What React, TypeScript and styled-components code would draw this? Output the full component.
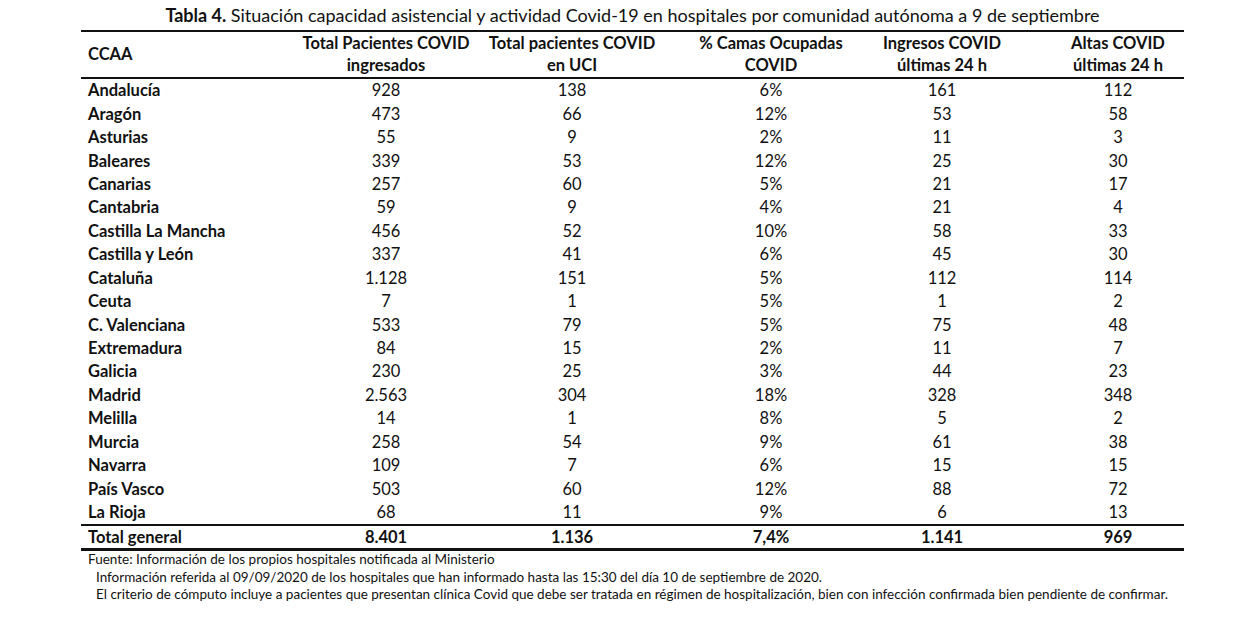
import React from 'react';
import styled, { createGlobalStyle } from 'styled-components';

const GlobalStyle = createGlobalStyle`
  *, *::before, *::after {
    box-sizing: border-box;
  }
  html, body {
    margin: 0;
    padding: 0;
    background: #fff;
  }
  body {
    font-family: Lato, "Open Sans", "Liberation Sans", sans-serif;
    color: #111;
  }
`;

type Row = [string, string, string, string, string, string];

const rows: Row[] = [
  ['Andalucía', '928', '138', '6%', '161', '112'],
  ['Aragón', '473', '66', '12%', '53', '58'],
  ['Asturias', '55', '9', '2%', '11', '3'],
  ['Baleares', '339', '53', '12%', '25', '30'],
  ['Canarias', '257', '60', '5%', '21', '17'],
  ['Cantabria', '59', '9', '4%', '21', '4'],
  ['Castilla La Mancha', '456', '52', '10%', '58', '33'],
  ['Castilla y León', '337', '41', '6%', '45', '30'],
  ['Cataluña', '1.128', '151', '5%', '112', '114'],
  ['Ceuta', '7', '1', '5%', '1', '2'],
  ['C. Valenciana', '533', '79', '5%', '75', '48'],
  ['Extremadura', '84', '15', '2%', '11', '7'],
  ['Galicia', '230', '25', '3%', '44', '23'],
  ['Madrid', '2.563', '304', '18%', '328', '348'],
  ['Melilla', '14', '1', '8%', '5', '2'],
  ['Murcia', '258', '54', '9%', '61', '38'],
  ['Navarra', '109', '7', '6%', '15', '15'],
  ['País Vasco', '503', '60', '12%', '88', '72'],
  ['La Rioja', '68', '11', '9%', '6', '13']
];

const total: Row = ['Total general', '8.401', '1.136', '7,4%', '1.141', '969'];

const headers = [
  ['Total Pacientes COVID', 'ingresados'],
  ['Total pacientes COVID', 'en UCI'],
  ['% Camas Ocupadas', 'COVID'],
  ['Ingresos COVID', 'últimas 24 h'],
  ['Altas COVID', 'últimas 24 h']
];

export default function App() {
  return (
    <>
      <GlobalStyle />
      <Page>
        <Title>
          <b>Tabla 4.</b> Situación capacidad asistencial y actividad Covid-19 en hospitales por
          comunidad autónoma a 9 de septiembre
        </Title>
        <Table>
          <HeaderRow>
            <NameCell>CCAA</NameCell>
            {headers.map((h, i) => (
              <HeadCell key={i}>
                <span>{h[0]}</span>
                <span>{h[1]}</span>
              </HeadCell>
            ))}
          </HeaderRow>
          {rows.map((r, i) => (
            <BodyRow key={r[0]} last={i === rows.length - 1}>
              <NameCell>{r[0]}</NameCell>
              {r.slice(1).map((v, j) => (
                <ValueCell key={j}>{v}</ValueCell>
              ))}
            </BodyRow>
          ))}
          <TotalRow>
            <NameCell>{total[0]}</NameCell>
            {total.slice(1).map((v, j) => (
              <ValueCell key={j}>{v}</ValueCell>
            ))}
          </TotalRow>
        </Table>
        <Notes>
          <Note>Fuente: Información de los propios hospitales notificada al Ministerio</Note>
          <Note indent>
            Información referida al 09/09/2020 de los hospitales que han informado hasta las 15:30
            del día 10 de septiembre de 2020.
          </Note>
          <Note indent>
            El criterio de cómputo incluye a pacientes que presentan clínica Covid que debe ser
            tratada en régimen de hospitalización, bien con infección confirmada bien pendiente de
            confirmar.
          </Note>
        </Notes>
      </Page>
    </>
  );
}

const Page = styled.div`
  width: 1103px;
  margin-left: 81px;
`;

const Title = styled.div`
  height: 30px;
  line-height: 30px;
  font-size: 18px;
  text-align: center;
  white-space: nowrap;
  display: flex;
  justify-content: center;
  gap: 0.25em;

  b {
    font-weight: 700;
  }
`;

const Table = styled.div`
  border-top: 2px solid #111;
  display: flex;
  flex-direction: column;
`;

const RowBase = styled.div`
  display: grid;
  grid-template-columns: 212px 186px 186px 212px 130px 222px;
  align-items: center;
  font-size: 16.5px;
  white-space: nowrap;
`;

const HeaderRow = styled(RowBase)`
  height: 47px;
  padding-bottom: 2px;
  font-weight: 700;
  border-bottom: 2px solid #111;
`;

const BodyRow = styled(RowBase)<{ last?: boolean }>`
  height: ${(p) => (p.last ? '25.45px' : '23.45px')};
  padding-bottom: 1px;
  border-bottom: ${(p) => (p.last ? '2px solid #111' : 'none')};
`;

const TotalRow = styled(RowBase)`
  height: 25px;
  padding-bottom: 1px;
  font-weight: 700;
  border-bottom: 3px solid #111;
`;

const NameCell = styled.div`
  padding-left: 7px;
  font-weight: 700;
`;

const HeadCell = styled.div`
  display: flex;
  flex-direction: column;
  align-items: center;
  line-height: 22px;
`;

const ValueCell = styled.div`
  text-align: center;
`;

const Notes = styled.div`
  display: flex;
  flex-direction: column;
`;

const Note = styled.div<{ indent?: boolean }>`
  font-size: 13.5px;
  line-height: 17.5px;
  padding-left: ${(p) => (p.indent ? '15px' : '7px')};
  white-space: nowrap;
`;
